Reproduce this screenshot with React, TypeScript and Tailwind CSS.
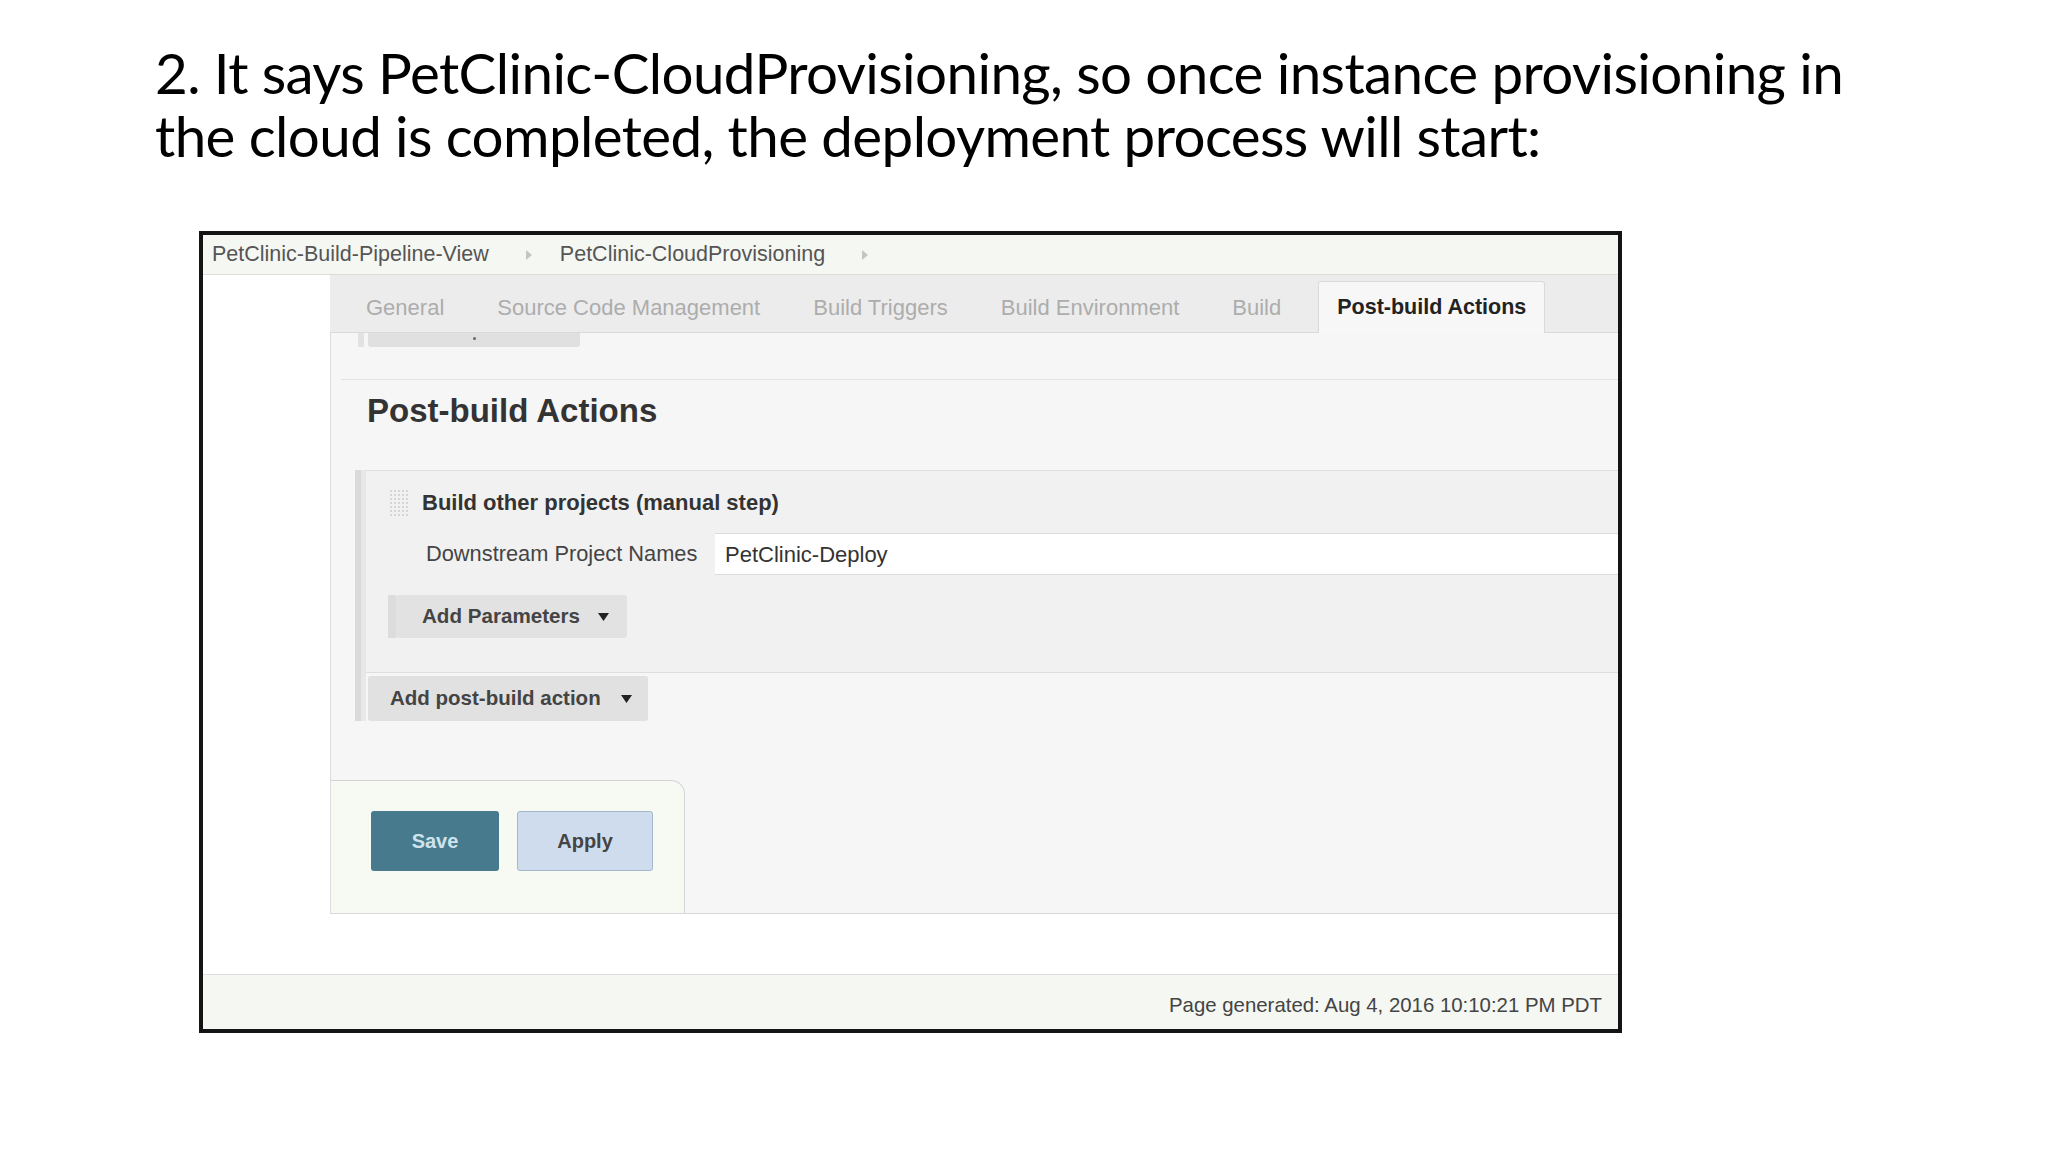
import React from 'react'

const Caret: React.FC = () => (
	<svg width="11" height="8" viewBox="0 0 11 8" className="inline-block">
		<polygon points="0,0 11,0 5.5,8" fill="#222" />
	</svg>
)

const BreadcrumbArrow: React.FC = () => (
	<svg width="6" height="10" viewBox="0 0 6 10" className="inline-block">
		<polygon points="0,0 6,5 0,10" fill="#c4c4c4" />
	</svg>
)

// drag handle drawn as a faint dotted grid
const GridHandle: React.FC = () => (
	<svg width="18" height="26" viewBox="0 0 18 26">
		{[0, 1, 2, 3, 4, 5, 6].map((r) =>
			[0, 1, 2, 3, 4].map((c) => (
				<rect key={`${r}-${c}`} x={c * 4} y={r * 4} width="2" height="2" fill="#d6d6d6" />
			)),
		)}
	</svg>
)

const tabs = ['General', 'Source Code Management', 'Build Triggers', 'Build Environment', 'Build']

export default function App() {
	return (
		<div className="min-h-[1152px] w-[2048px] bg-white font-['Liberation_Sans',Arial,sans-serif]">
			{/* slide caption */}
			<div className="pl-[155px] pt-[41px] font-['Lato',sans-serif] text-[56.5px] leading-[63px] tracking-[-0.6px] text-black">
				<p>2. It says PetClinic-CloudProvisioning, so once instance provisioning in</p>
				<p>the cloud is completed, the deployment process will start:</p>
			</div>

			{/* jenkins screenshot */}
			<div className="ml-[199px] mt-[64px] w-[1423px] h-[802px] border-4 border-[#141414] flex flex-col bg-white">
				<div className="h-[40px] flex items-center pl-[9px] bg-[#f5f7f2] border-b border-[#dcdcdc] text-[21.5px] text-[#555]">
					<span>PetClinic-Build-Pipeline-View</span>
					<span className="ml-[37px] mr-[28px] flex"><BreadcrumbArrow /></span>
					<span>PetClinic-CloudProvisioning</span>
					<span className="ml-[37px] flex"><BreadcrumbArrow /></span>
				</div>

				<div className="flex">
					<div className="w-[127px] shrink-0 bg-white" />
					<div className="flex-1 flex flex-col">
						{/* config tabs */}
						<div className="h-[58px] bg-[#ececec] border-b border-[#dadada] flex items-end pl-[36px]">
							<div className="flex items-center h-[50px] gap-[53px] text-[22px] text-[#adadad]">
								{tabs.map((t) => (
									<span key={t}>{t}</span>
								))}
							</div>
							<div className="ml-[37px] h-[52px] -mb-px px-[18px] flex items-center bg-[#f7f7f7] border border-b-0 border-[#dadada] rounded-t-[3px] text-[21.5px] font-bold text-[#222]">
								Post-build Actions
							</div>
						</div>

						{/* form area */}
						<div className="bg-[#f6f6f6] border-l border-[#dcdcdc] flex flex-col">
							<div className="flex pl-[27px] h-[14px]">
								<div className="w-[6px] bg-[#e2e2e2]" />
								<div className="ml-[4px] w-[212px] bg-[#e0e0e0] rounded-b-[3px] flex justify-center">
									<div className="w-[3px] h-[3px] mt-[4px] bg-[#666] rounded-full" />
								</div>
							</div>
							<div className="ml-[10px] mt-[32px] border-t border-[#e3e3e3]" />
							<h2 className="pl-[36px] pt-[12px] text-[33px] leading-[38px] font-bold text-[#333]">Post-build Actions</h2>

							<div className="ml-[24px] mt-[40px] flex border-l-[6px] border-[#dadada]">
								<div className="flex-1 flex flex-col border-l-[5px] border-[#e8e8e8]">
									<div className="bg-[#f1f1f1] border-t border-b border-[#dedede] pb-[34px]">
										<div className="flex items-center pl-[24px] pt-[15px] gap-[14px]">
											<GridHandle />
											<span className="text-[22px] font-bold text-[#333]">Build other projects (manual step)</span>
										</div>
										<div className="flex items-center mt-[14px] pl-[60px]">
											<span className="w-[289px] shrink-0 text-[21.8px] text-[#444]">Downstream Project Names</span>
											<div className="flex-1 h-[42px] bg-white border-t border-b border-[#dcdcdc] flex items-center pl-[10px] text-[22px] text-[#333]">
												PetClinic-Deploy
											</div>
										</div>
										<div className="flex mt-[20px] ml-[22px]">
											<div className="w-[8px] h-[43px] bg-[#dcdcdc]" />
											<div className="h-[43px] w-[231px] bg-[#e2e2e2] rounded-[3px] flex items-center pl-[26px] gap-[18px] text-[20.6px] font-bold text-[#444]">
												Add Parameters
												<Caret />
											</div>
										</div>
									</div>
									<div className="ml-[2px] mt-[3px] h-[45px] w-[280px] bg-[#e1e1e1] rounded-[3px] flex items-center pl-[22px] gap-[20px] text-[20.5px] font-bold text-[#444]">
										Add post-build action
										<Caret />
									</div>
								</div>
							</div>

							<div className="mt-[59px] flex border-b border-[#d8d8d8]">
								<div className="w-[354px] h-[133px] bg-[#f7f9f3] border-t border-r border-[#d4d4d4] rounded-tr-[14px] flex items-start pt-[30px] pl-[40px] gap-[18px]">
									<div className="w-[128px] h-[60px] bg-[#477a8c] rounded-[3px] flex items-center justify-center text-[20px] font-bold text-[#cfe3ec]">
										Save
									</div>
									<div className="w-[136px] h-[60px] bg-[#cfdced] border border-[#a4b7cb] rounded-[3px] flex items-center justify-center text-[20px] font-bold text-[#444]">
										Apply
									</div>
								</div>
							</div>
						</div>
					</div>
				</div>

				<div className="h-[60px] bg-white" />
				<div className="flex-1 bg-[#f5f7f2] border-t border-[#dedede] flex items-center justify-end pr-[16px] pt-[6px] text-[20.4px] text-[#444]">
					Page generated: Aug 4, 2016 10:10:21 PM PDT
				</div>
			</div>
		</div>
	)
}
